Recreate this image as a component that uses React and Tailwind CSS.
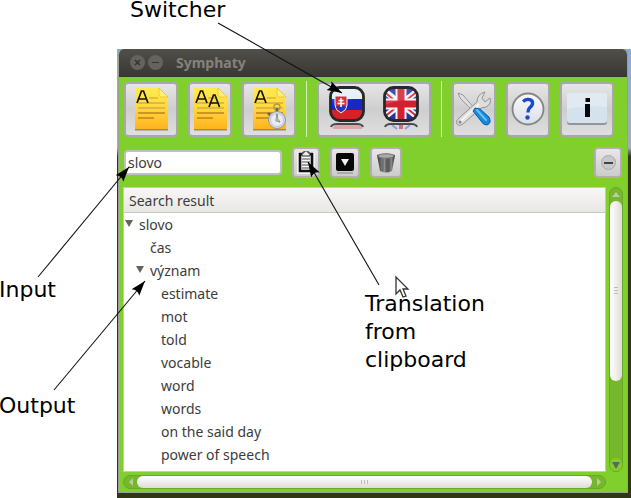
import React from "react";

const toolButton =
  "flex h-[55px] shrink-0 items-center justify-center rounded border-2 border-[#aaa6aa] bg-linear-to-b from-[#e6e6e6] via-[#cecece] to-[#dfdfdf]";
const smallButton =
  "flex h-[31px] shrink-0 items-center justify-center rounded border-2 border-[#b1adb1] bg-linear-to-b from-[#e8e8e8] to-[#cccccc]";

function Note({ kind }) {
  return (
    <svg width="40" height="46" viewBox="0 0 40 46" className="shrink-0" aria-hidden="true">
      <defs>
        <linearGradient id="paper" x1="0" y1="0" x2="0" y2="1">
          <stop offset="0" stopColor="#ffec50" />
          <stop offset="0.5" stopColor="#ffd83c" />
          <stop offset="1" stopColor="#ffb31e" />
        </linearGradient>
      </defs>
      <path d="M4 44.500H37V43H4z" fill="#9a8a62" />
      <path d="M4 2H28L37 11V43H4z" fill="url(#paper)" />
      <path d="M28 2L37 11H30Q28 11 28 8z" fill="#fff07a" stroke="#e9b92c" strokeWidth="0.7" />
      <g strokeWidth="1.600">
        <path d="M18 12H27" stroke="#d9b535" />
        <path d="M7 17H34M7 22H34" stroke="#d3ad45" />
        <path d="M7 27H34" stroke="#bd8320" />
        <path d="M7 32H23" stroke="#bd8320" />
      </g>
      <g fill="none" stroke="#151509" strokeWidth="1.700">
        <path d="M6 17L10.500 5H12.500L17 17M8 13H15" />
        {kind === "double" && <path d="M19 21L23.500 9H25L29.500 21M21 17H28" />}
      </g>
      {kind === "timed" && (
        <g>
          <circle cx="28" cy="21" r="3" fill="none" stroke="#b9953b" strokeWidth="1.300" />
          <path d="M28 22V27M19 27L22 30" stroke="#66665e" strokeWidth="2.500" />
          <circle cx="28" cy="34" r="8.500" fill="#dadde1" stroke="#929597" />
          <circle cx="28" cy="34" r="6.500" fill="#e8edf3" stroke="#b5b9c0" strokeWidth="0.7" />
          <path d="M28 28V34L31 36" fill="none" stroke="#888d93" strokeWidth="1.800" />
          <circle cx="28" cy="34" r="2" fill="#adb2b8" />
        </g>
      )}
    </svg>
  );
}

function SlovakFlag() {
  return (
    <svg width="38" height="48" viewBox="0 0 38 48" aria-hidden="true">
      <defs>
        <clipPath id="skClip"><rect x="3" y="3" width="32" height="32" rx="9" /></clipPath>
        <linearGradient id="shine" x1="0" y1="0" x2="0" y2="1">
          <stop offset="0" stopColor="#fff" stopOpacity="0.4" />
          <stop offset="1" stopColor="#fff" stopOpacity="0" />
        </linearGradient>
      </defs>
      <g clipPath="url(#skClip)">
        <path d="M2 2H36V15H2z" fill="#e1edf5" />
        <path d="M2 14H36V25H2z" fill="#1727c8" />
        <path d="M2 25H36V36H2z" fill="#d92025" />
        <path d="M2 2H36V13Q20 14 2 20z" fill="url(#shine)" />
      </g>
      <path d="M7 11H19V20Q19 25 13 28Q7 25 7 20z" fill="#d93138" stroke="#edf3f8" />
      <path d="M8 22Q10 19 13 22Q16 19 18 22Q17 25 13 27Q9 25 8 22z" fill="#2533bd" />
      <path d="M13 13V22M10.500 15.500H15.500M9.500 18.500H16.500" stroke="#fff" strokeWidth="1.500" />
      <rect x="2.500" y="2.500" width="33" height="33" rx="9" fill="none" stroke="#26282b" strokeWidth="2.800" />
      <path d="M3 42Q4 39 9 39H29Q34 39 35 42" fill="none" stroke="#4a4a4d" strokeWidth="2" />
      <path d="M5 42Q7 40 10 40H28Q32 40 34 42V44H5z" fill="#d5868c" opacity="0.6" />
    </svg>
  );
}

function BritishFlag() {
  return (
    <svg width="38" height="48" viewBox="0 0 38 48" aria-hidden="true">
      <defs><clipPath id="ukClip"><rect x="3" y="3" width="32" height="32" rx="9" /></clipPath></defs>
      <g clipPath="url(#ukClip)">
        <path d="M2 2H36V36H2z" fill="#2432a4" />
        <path d="M0 4L38 34M38 4L0 34" stroke="#f3f5fa" strokeWidth="6" />
        <path d="M0 5L17 19M38 4L21 18M0 34L17 20M38 34L21 20" stroke="#d72c3b" strokeWidth="2" />
        <path d="M19 0V38M0 19H38" stroke="#f3f5fa" strokeWidth="11" />
        <path d="M19 0V38M0 19H38" stroke="#d3202f" strokeWidth="7" />
        <path d="M2 2H36V14Q20 14 2 20z" fill="#fff" opacity="0.14" />
      </g>
      <rect x="2.500" y="2.500" width="33" height="33" rx="9" fill="none" stroke="#26282b" strokeWidth="2.800" />
      <path d="M3 42Q4 39 9 39H29Q34 39 35 42" fill="none" stroke="#4a4a4d" strokeWidth="2" />
      <path d="M5 42L8 40H30L34 42V44H5z" fill="#d5d8e5" opacity="0.8" />
      <path d="M10 40L15 44M28 40L23 44" stroke="#6872ad" strokeWidth="2" opacity="0.6" />
      <path d="M17 40H21V44H17z" fill="#cb5964" opacity="0.8" />
    </svg>
  );
}

function Tools() {
  return (
    <svg width="38" height="38" viewBox="0 0 38 38" className="shrink-0" aria-hidden="true">
      <path d="M3 3L8 5L19 18L17 20L5 8z" fill="#dedede" stroke="#929292" strokeWidth="0.9" />
      <path d="M30 2L27 8L30 12L35 8Q37 14 31 17L26 18L9 33Q5 37 2 34Q0 31 4 28L22 12Q22 4 30 2z" fill="#dededc" stroke="#929292" />
      <path d="M6 31L24 14" stroke="#f4f4f2" strokeWidth="2" />
      <circle cx="5" cy="32" r="1.500" fill="#888" />
      <path d="M20 18L25 19L34 27Q37 33 32 35Q28 35 26 31L18 21z" fill="#168ade" stroke="#075da7" />
      <path d="M22 20L31 30" stroke="#6ac1f5" strokeWidth="2" strokeLinecap="round" />
    </svg>
  );
}

function Help() {
  return (
    <svg width="34" height="34" viewBox="0 0 34 34" aria-hidden="true">
      <defs>
        <linearGradient id="disc" x1="0" y1="0" x2="0" y2="1">
          <stop stopColor="#f8f9fb" /><stop offset="1" stopColor="#dbe0e8" />
        </linearGradient>
      </defs>
      <circle cx="17" cy="17" r="15.500" fill="url(#disc)" stroke="#858585" strokeWidth="1.800" />
      <path d="M12 9.500Q15 7 18 7.500Q22 8 21.500 12Q21 14 18.500 16Q17 17.500 17 20.500" fill="none" stroke="#194bd2" strokeWidth="3.400" />
      <circle cx="16.500" cy="25.500" r="2.200" fill="#194bd2" />
    </svg>
  );
}

function Info() {
  return (
    <svg width="42" height="34" viewBox="0 0 42 34" aria-hidden="true">
      <rect x="1" y="3" width="40" height="30" rx="3" fill="#8f969d" />
      <rect x="1" y="1" width="40" height="30" rx="3" fill="#d4e2ee" />
      <path d="M1 3Q1 1 4 1H38Q41 1 41 3V15Q20 13 1 17z" fill="#e0eaf0" />
      <path d="M19.500 6H24V10H19.500zM19 12H24V25H19z" fill="#080808" />
    </svg>
  );
}

function Clipboard() {
  return (
    <svg width="18" height="23" viewBox="0 0 18 23" className="shrink-0" aria-hidden="true">
      <path d="M0 1H18V23H0z" fill="#f2f2f2" />
      <path d="M3 3H15V20H3z" fill="#f7f7f7" stroke="#101010" strokeWidth="2.600" />
      <path d="M5 5V2H7V0H11V2H13V5z" fill="#eee" stroke="#252525" />
      <path d="M5 8H13M5 11H13M5 14H13M5 17H13" stroke="#858585" strokeWidth="1.500" />
    </svg>
  );
}

function Dropdown() {
  return (
    <svg width="20" height="24" viewBox="0 0 20 24" aria-hidden="true">
      <rect x="1" y="2" width="18" height="18" rx="2" fill="#080808" />
      <path d="M6 8H14L10 15z" fill="#f1f1f1" />
      <path d="M2 21H18V23H2z" fill="#aaa" />
    </svg>
  );
}

function Bin() {
  return (
    <svg width="20" height="22" viewBox="0 0 20 22" aria-hidden="true">
      <defs>
        <linearGradient id="bin"><stop stopColor="#333" /><stop offset="0.4" stopColor="#969696" /><stop offset="0.6" stopColor="#555" /><stop offset="0.8" stopColor="#888" /><stop offset="1" stopColor="#292929" /></linearGradient>
      </defs>
      <path d="M1 3Q10 0 19 3L16 19Q10 22 4 19z" fill="url(#bin)" />
      <ellipse cx="10" cy="4" rx="8" ry="2.200" fill="#aaa" stroke="#777" />
      <path d="M7 7V19M10 7V20M13 7V19" stroke="#555" strokeWidth="0.8" />
    </svg>
  );
}

function Triangle({ direction }) {
  const shapes = { up: "M0 6L4 1L8 6z", down: "M0 1H8L4 8z", left: "M2 4L6 0V8z", right: "M2 0L6 4L2 8z" };
  return (
    <svg width="8" height="8" viewBox="0 0 8 8" className="shrink-0" aria-hidden="true">
      <path d={shapes[direction]} fill={direction === "down" ? "#62675d" : "#b5cf9c"} />
    </svg>
  );
}

const results = [
  { text: "slovo", open: true, indent: "pl-[1px]" },
  { text: "čas", indent: "pl-[12px]" },
  { text: "význam", open: true, indent: "pl-[12px]" },
  { text: "estimate", indent: "pl-[23px]" },
  { text: "mot", indent: "pl-[23px]" },
  { text: "told", indent: "pl-[23px]" },
  { text: "vocable", indent: "pl-[23px]" },
  { text: "word", indent: "pl-[23px]" },
  { text: "words", indent: "pl-[23px]" },
  { text: "on the said day", indent: "pl-[23px]" },
  { text: "power of speech", indent: "pl-[23px]" },
];

function Toolbar() {
  return (
    <div className="flex items-center gap-[10px]">
      <button aria-label="Translate word" className={`${toolButton} w-[54px]`}><Note /></button>
      <button aria-label="Translate text" className={`${toolButton} w-[44px]`}><Note kind="double" /></button>
      <button aria-label="Timed translation" className={`${toolButton} w-[54px]`}><Note kind="timed" /></button>
      <span className="h-14 w-px shrink-0 bg-[#d6edbd]" />
      <button aria-label="Switch language" className={`${toolButton} w-[114px] gap-4`}><SlovakFlag /><BritishFlag /></button>
      <span className="h-14 w-px shrink-0 bg-[#d6edbd]" />
      <button aria-label="Settings" className={`${toolButton} w-[44px]`}><Tools /></button>
      <button aria-label="Help" className={`${toolButton} w-[44px]`}><Help /></button>
      <button aria-label="About" className={`${toolButton} w-[54px]`}><Info /></button>
    </div>
  );
}

function SearchRow() {
  return (
    <div className="mt-[10px] flex items-center gap-[10px]">
      <input aria-label="Word" defaultValue="slovo" className="h-[25px] w-[158px] shrink-0 rounded border-2 border-[#c1bfc3] bg-white px-[2px] text-[14px] text-[#3c3c3c] outline-none" />
      <button aria-label="Translate from clipboard" className={`${smallButton} w-[28px]`}><Clipboard /></button>
      <button aria-label="History" className={`${smallButton} w-[30px]`}><Dropdown /></button>
      <button aria-label="Clear" className={`${smallButton} w-[32px]`}><Bin /></button>
      <button aria-label="Hide" className={`${smallButton} ml-auto w-[28px]`}>
        <span className="flex size-[15px] items-center justify-center rounded-full border border-[#aaa] bg-[#c8c8c8]"><span className="h-[2px] w-[9px] bg-[#444]" /></span>
      </button>
    </div>
  );
}

function Results() {
  return (
    <div className="mt-[9px] mr-[4px] ml-[4px] flex flex-1 gap-[3px]">
      <div className="flex min-w-0 flex-1 flex-col gap-[3px]">
        <section className="flex-1 border border-[#c9c6c3] bg-white">
          <h2 className="h-[25px] border-b border-[#cbc8c4] bg-linear-to-b from-[#f8f7f6] to-[#e9e7e4] px-[5px] leading-[26px]">Search result</h2>
          <ul>
            {results.map((item) => (
              <li key={item.text} className={`flex h-[23px] items-center gap-[6px] ${item.indent}`}>
                {item.open ? <button aria-label={`Collapse ${item.text}`} className="pb-[3px]"><Triangle direction="down" /></button> : <span className="w-2" />}
                <span>{item.text}</span>
              </li>
            ))}
          </ul>
        </section>
        <div className="flex h-[14px] items-center rounded-full border border-[#69a925] bg-[#76b82d]">
          <span className="flex w-[13px] justify-center"><Triangle direction="left" /></span>
          <span className="flex h-full flex-1 items-center justify-center gap-[2px] rounded-full bg-linear-to-b from-white via-[#f1efed] to-[#dedbd9]">
            <i className="h-[4px] w-px bg-[#bbb]" /><i className="h-[4px] w-px bg-[#bbb]" /><i className="h-[4px] w-px bg-[#bbb]" />
          </span>
          <span className="flex w-[13px] justify-center"><Triangle direction="right" /></span>
        </div>
      </div>
      <div className="mb-[17px] flex w-[14px] flex-col items-center rounded-full border border-[#69a925] bg-[#76b82d]">
        <span className="flex h-[13px] items-center"><Triangle direction="up" /></span>
        <span className="flex w-full flex-[179] flex-col items-center justify-center gap-[2px] rounded-full bg-linear-to-r from-white via-[#f1efed] to-[#dedbd9]">
          <i className="h-px w-[4px] bg-[#bbb]" /><i className="h-px w-[4px] bg-[#bbb]" /><i className="h-px w-[4px] bg-[#bbb]" />
        </span>
        <span className="w-full flex-[77]" />
        <span className="flex h-[13px] w-full items-center justify-center rounded-full bg-[#80cd2d]"><Triangle direction="down" /></span>
      </div>
    </div>
  );
}

function Annotations() {
  return (
    <div className="pointer-events-none absolute inset-0 font-['DejaVu_Sans',sans-serif] text-[22px] leading-[28px] text-black">
      <svg width="631" height="498" viewBox="0 0 631 498" className="absolute top-0 left-0" aria-hidden="true">
        <defs>
          <marker id="arrowhead" markerUnits="userSpaceOnUse" markerWidth="16" markerHeight="14" refX="15" refY="7" orient="auto">
            <path d="M15 7L0 2Q4 7 0 12z" fill="#000" />
          </marker>
        </defs>
        <g stroke="#111" strokeWidth="1.100">
          <path d="M218 23L342 93" markerEnd="url(#arrowhead)" />
          <path d="M38 277L129 167" markerEnd="url(#arrowhead)" />
          <path d="M379 285L308 162" markerEnd="url(#arrowhead)" />
          <path d="M54 390L145 281" markerEnd="url(#arrowhead)" />
        </g>
        <path d="M396 277V294L400 290L403 297L406 296L403 289H408z" fill="#fff" stroke="#333" strokeWidth="1.300" />
      </svg>
      <p className="absolute top-0 left-[130px] leading-[20px]">Switcher</p>
      <p className="absolute top-[276px] -left-px">Input</p>
      <p className="absolute top-[392px] -left-px">Output</p>
      <p className="absolute top-[290px] left-[365px]">Translation<br />from<br />clipboard</p>
    </div>
  );
}

export default function App() {
  return (
    <main className="relative flex min-h-screen flex-col bg-white pt-[49px] pl-[117px] font-['Noto_Sans',sans-serif] text-[14px] text-[#3c3c3c]">
      <div className="flex flex-1 flex-col bg-linear-to-b from-[#8aabd8] from-0% via-[#a5adb9] via-22% to-[#303714] to-24% pr-[3px] pb-[5px] pl-[1px]">
        <div className="flex flex-1 flex-col overflow-hidden rounded-t-md border-x border-b border-[#9b9f92] bg-[#81cf2d]">
          <header className="flex h-[28px] items-center border-b border-[#35342f] bg-linear-to-b from-[#504f49] to-[#393833] pl-[11px]">
            <button aria-label="Close" className="flex size-[15px] items-center justify-center rounded-full bg-[#64635d]">
              <svg width="7" height="7" viewBox="0 0 7 7"><path d="M1 1L6 6M6 1L1 6" stroke="#34332f" strokeWidth="1.500" /></svg>
            </button>
            <button aria-label="Minimize" className="ml-[3px] flex size-[15px] items-center justify-center rounded-full bg-[#64635d]"><span className="h-px w-[7px] bg-[#34332f]" /></button>
            <h1 className="ml-[13px] text-[14px] font-bold text-[#85827b]">Symphaty</h1>
          </header>
          <div className="px-[5px] pt-[4px]"><Toolbar /><SearchRow /></div>
          <Results />
          <div className="h-[3px]" />
        </div>
      </div>
      <Annotations />
    </main>
  );
}
